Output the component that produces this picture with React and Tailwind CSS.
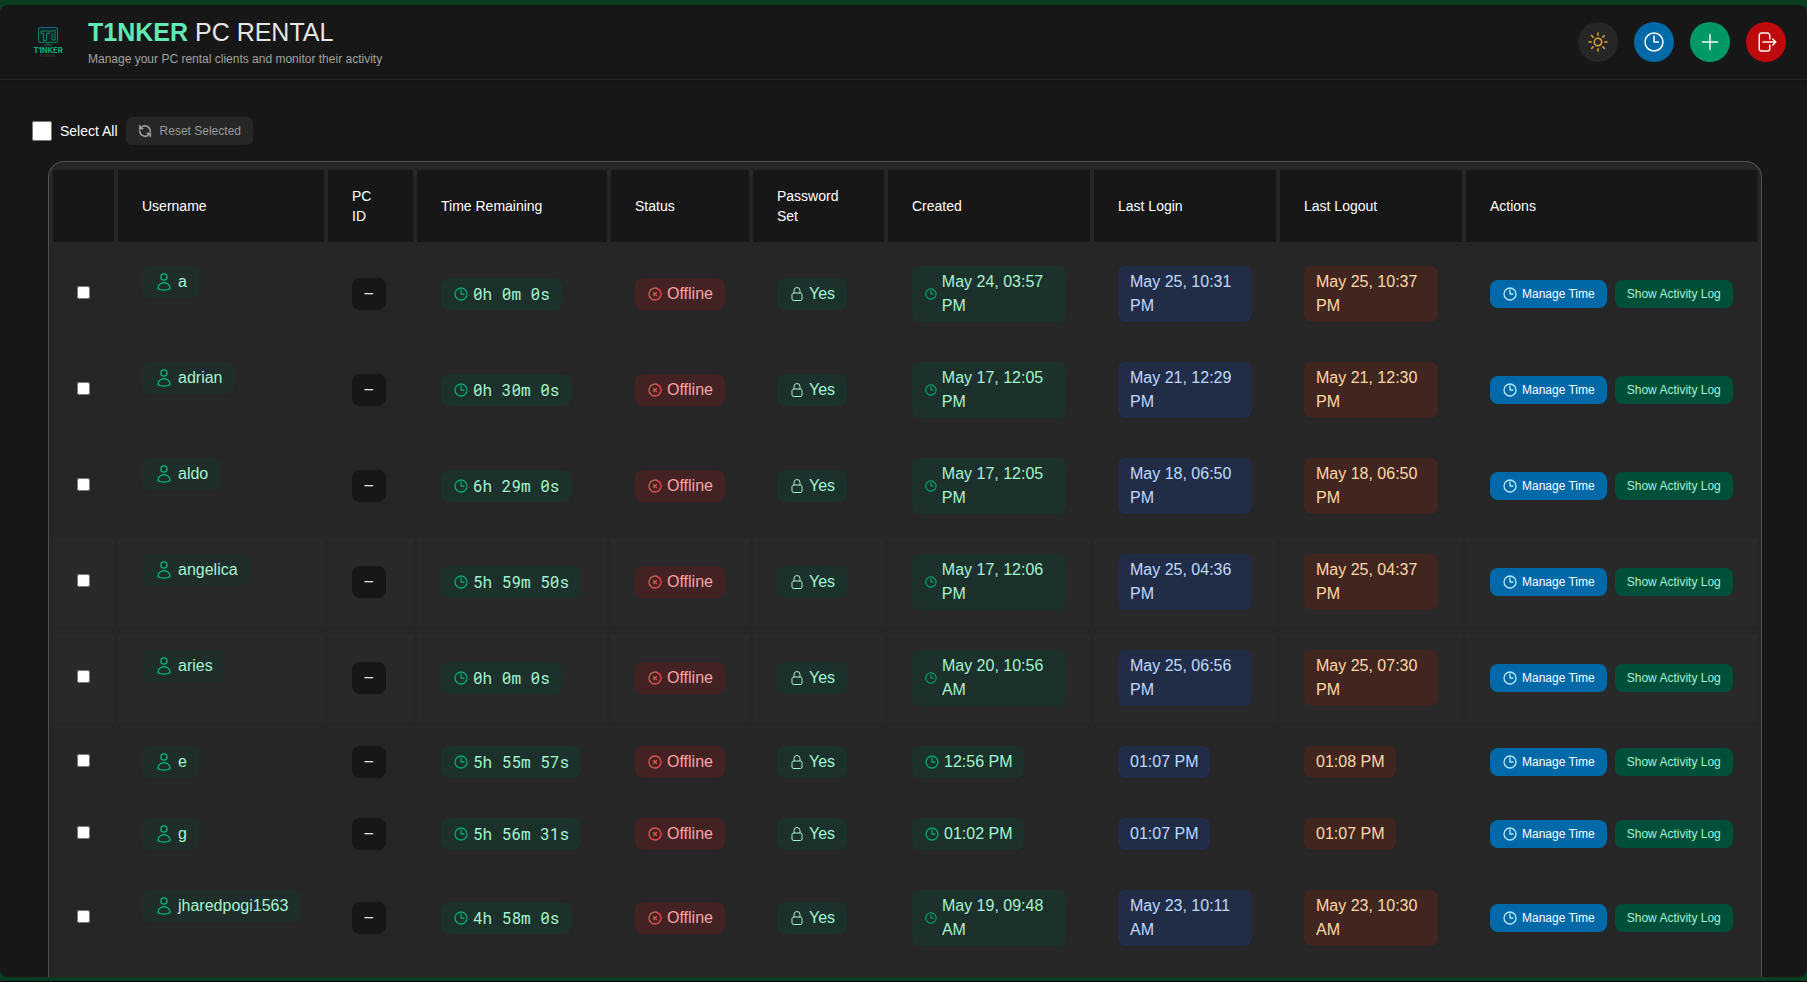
import { useState } from 'react';
import {
    HiOutlineArrowRightOnRectangle,
    HiOutlineClock,
    HiOutlineLockClosed,
    HiOutlinePlus,
    HiOutlineSun,
    HiOutlineUser,
    HiOutlineXCircle
} from 'react-icons/hi2';
import { RefreshCcw } from 'lucide-react';

const columns = [
    { name: '', width: 'w-[61px]' },
    { name: 'Username', width: 'w-[206px]' },
    { name: 'PC ID', width: 'w-[85px]' },
    { name: 'Time Remaining', width: 'w-[190px]' },
    { name: 'Status', width: 'w-[138px]' },
    { name: 'Password Set', width: 'w-[131px]' },
    { name: 'Created', width: 'w-[202px]' },
    { name: 'Last Login', width: 'w-[182px]' },
    { name: 'Last Logout', width: 'w-[182px]' },
    { name: 'Actions', width: 'w-[291px]' }
];

const clients = [
    { name: 'a', time: '0h 0m 0s', created: 'May 24, 03:57 PM', login: 'May 25, 10:31 PM', logout: 'May 25, 10:37 PM' },
    { name: 'adrian', time: '0h 30m 0s', created: 'May 17, 12:05 PM', login: 'May 21, 12:29 PM', logout: 'May 21, 12:30 PM' },
    { name: 'aldo', time: '6h 29m 0s', created: 'May 17, 12:05 PM', login: 'May 18, 06:50 PM', logout: 'May 18, 06:50 PM' },
    { name: 'angelica', time: '5h 59m 50s', created: 'May 17, 12:06 PM', login: 'May 25, 04:36 PM', logout: 'May 25, 04:37 PM', lit: true },
    { name: 'aries', time: '0h 0m 0s', created: 'May 20, 10:56 AM', login: 'May 25, 06:56 PM', logout: 'May 25, 07:30 PM', lit: true },
    { name: 'e', time: '5h 55m 57s', created: '12:56 PM', login: '01:07 PM', logout: '01:08 PM' },
    { name: 'g', time: '5h 56m 31s', created: '01:02 PM', login: '01:07 PM', logout: '01:07 PM' },
    { name: 'jharedpogi1563', time: '4h 58m 0s', created: 'May 19, 09:48 AM', login: 'May 23, 10:11 AM', logout: 'May 23, 10:30 AM' }
];

const mono = 'font-["Roboto_Mono","Liberation_Mono",monospace]';

function Logo() {
    return (
        <svg viewBox="0 0 48 48" className="size-12" aria-hidden="true">
            <rect x="14.5" y="9.5" width="19" height="15" rx="1.5" fill="#0b2523" stroke="#0c7a63" />
            <path d="M15 9.5h18" stroke="#17627c" />
            <path d="M17 13h8v2.5h-2.5v7h-3v-7H17z" fill="none" stroke="#159a74" strokeWidth="0.8" />
            <path d="M26 14l2.5-1.5H31V22h-3v-6.5" fill="none" stroke="#159a74" strokeWidth="0.8" />
            <path d="M20 27h8M24 25v2" stroke="#0c6b55" />
            <text x="24" y="34.5" textAnchor="middle" fontSize="7.5" fontWeight="800" fill="#06a878" fontFamily="Inter, sans-serif">T1NKER</text>
            <text x="24" y="38.5" textAnchor="middle" fontSize="3" fill="#3a4a46" fontFamily="Inter, sans-serif">PC RENTAL</text>
        </svg>
    );
}

function Chip({ className, children }) {
    return (
        <span className={`inline-flex items-center gap-1 rounded-lg px-3 py-1 align-top ${className}`}>
            {children}
        </span>
    );
}

function RoundButton({ label, className, children }) {
    return (
        <button
            type="button"
            aria-label={label}
            className={`flex size-10 items-center justify-center rounded-full ${className}`}
        >
            {children}
        </button>
    );
}

function ClientRow({ client, checked, onToggle }) {
    const cell = client.lit ? 'px-6 py-4 bg-[#292929]' : 'px-6 py-4';

    return (
        <tr>
            <td className={cell}>
                <input
                    type="checkbox"
                    aria-label={`Select ${client.name}`}
                    checked={checked}
                    onChange={onToggle}
                />
            </td>
            <td className={`${cell} align-top`}>
                <Chip className="bg-[#202e2b] text-emerald-200">
                    <HiOutlineUser className="size-5 text-emerald-500" />
                    {client.name}
                </Chip>
            </td>
            <td className={cell}>
                <Chip className={`bg-neutral-900 text-stone-200 ${mono}`}>–</Chip>
            </td>
            <td className={cell}>
                <Chip className={`bg-[#1c312b] whitespace-nowrap text-emerald-200 ${mono}`}>
                    <HiOutlineClock strokeWidth={2} className="size-4 text-[#07a56f]" />
                    {client.time}
                </Chip>
            </td>
            <td className={cell}>
                <Chip className="bg-[#432223] text-red-300">
                    <HiOutlineXCircle strokeWidth={2} className="size-4 text-[#e0524f]" />
                    Offline
                </Chip>
            </td>
            <td className={cell}>
                <Chip className="bg-[#1c312b] text-emerald-200">
                    <HiOutlineLockClosed className="size-4" />
                    Yes
                </Chip>
            </td>
            <td className={cell}>
                <Chip className="bg-[#1c312b] text-emerald-200">
                    <HiOutlineClock strokeWidth={2} className="size-4 text-[#07a56f]" />
                    {client.created}
                </Chip>
            </td>
            <td className={cell}>
                <Chip className="bg-[#212c47] text-blue-200">{client.login}</Chip>
            </td>
            <td className={cell}>
                <Chip className="bg-[#40261e] text-orange-200">{client.logout}</Chip>
            </td>
            <td className={cell}>
                <div className="flex items-center gap-2 text-xs font-medium whitespace-nowrap">
                    <button type="button" className="flex items-center gap-1 rounded-lg bg-sky-700 px-3 py-1.5 text-white">
                        <HiOutlineClock strokeWidth={2} className="size-4 text-sky-200" />
                        Manage Time
                    </button>
                    <button type="button" className="rounded-lg bg-emerald-900 px-3 py-1.5 text-emerald-200">
                        Show Activity Log
                    </button>
                </div>
            </td>
        </tr>
    );
}

export default function App() {
    const [selected, setSelected] = useState([]);
    const allSelected = selected.length === clients.length;

    const toggle = (name) => {
        setSelected(selected.includes(name) ? selected.filter(n => n !== name) : [...selected, name]);
    };

    return (
        <div className='h-screen bg-black pb-px font-["Liberation_Sans",Arial,sans-serif]'>
            <div className="h-full bg-[#0b3c20] pt-[5px] pb-1">
                <div className="flex h-full flex-col overflow-hidden rounded-lg bg-neutral-900">
                    {/* Header */}
                    <header className="flex shrink-0 items-center justify-between border-b border-neutral-800 py-3 pr-[21px] pl-6 shadow-md">
                        <div className="flex items-center gap-4">
                            <Logo />
                            <div className="flex flex-col gap-1">
                                <h1 className="text-[25px] leading-[30px] text-stone-200">
                                    <span className="font-bold text-emerald-300">T1NKER</span> PC RENTAL
                                </h1>
                                <p className="text-xs text-neutral-400">
                                    Manage your PC rental clients and monitor their activity
                                </p>
                            </div>
                        </div>
                        <div className="flex gap-4 text-2xl">
                            <RoundButton label="Toggle theme" className="bg-neutral-800 text-[#e0a030]">
                                <HiOutlineSun />
                            </RoundButton>
                            <RoundButton label="Time settings" className="bg-sky-700 text-white">
                                <HiOutlineClock />
                            </RoundButton>
                            <RoundButton label="Add client" className="bg-emerald-600 text-emerald-50">
                                <HiOutlinePlus />
                            </RoundButton>
                            <RoundButton label="Log out" className="bg-[#be0a0c] text-orange-50">
                                <HiOutlineArrowRightOnRectangle />
                            </RoundButton>
                        </div>
                    </header>

                    <main className="flex min-h-0 flex-1 flex-col gap-4 overflow-hidden pt-[37px]">
                        {/* Bulk actions */}
                        <div className="flex shrink-0 items-center gap-2 px-8">
                            <label className="flex items-center gap-2 text-sm text-white">
                                <input
                                    type="checkbox"
                                    className="size-5"
                                    checked={allSelected}
                                    onChange={() => setSelected(allSelected ? [] : clients.map(c => c.name))}
                                />
                                Select All
                            </label>
                            <button
                                type="button"
                                onClick={() => setSelected([])}
                                className="flex items-center gap-2 rounded-md bg-neutral-800 px-3 py-1.5 text-xs text-[#999999]"
                            >
                                <RefreshCcw strokeWidth={3} className="size-3.5" />
                                Reset Selected
                            </button>
                        </div>

                        {/* Clients table */}
                        <div className="mr-[45px] ml-12 flex-1 rounded-t-2xl border border-b-0 border-neutral-600 bg-neutral-800 shadow-xl">
                            <table className="w-full table-fixed border-separate border-spacing-x-1 border-spacing-y-2 text-left">
                                <thead>
                                    <tr>
                                        {columns.map(col => (
                                            <th
                                                key={col.name}
                                                scope="col"
                                                className={`bg-neutral-900 px-6 py-4 text-sm font-medium text-white ${col.width}`}
                                            >
                                                {col.name}
                                            </th>
                                        ))}
                                    </tr>
                                </thead>
                                <tbody>
                                    {clients.map(client => (
                                        <ClientRow
                                            key={client.name}
                                            client={client}
                                            checked={selected.includes(client.name)}
                                            onToggle={() => toggle(client.name)}
                                        />
                                    ))}
                                </tbody>
                            </table>
                        </div>
                    </main>
                </div>
            </div>
        </div>
    );
}
